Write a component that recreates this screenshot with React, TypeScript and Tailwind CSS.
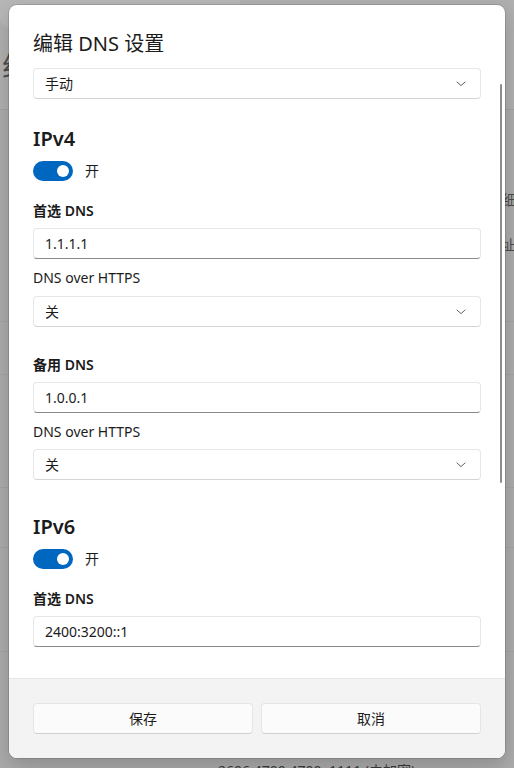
import React from 'react';

const font = { fontFamily: '"Noto Sans", "Noto Sans CJK SC", sans-serif' };

const Chevron = () => (
  <svg width="10" height="6" viewBox="0 0 10 6" fill="none">
    <path d="M1 1 L5 4.6 L9 1" stroke="#5f5f5f" strokeWidth="1" strokeLinecap="round" strokeLinejoin="round" />
  </svg>
);

const Select = ({ value, className = '' }: { value: string; className?: string }) => (
  <div className={`flex items-center justify-between h-[31px] px-[11px] pr-[14px] rounded-[4px] bg-white border border-[#e6e6e6] border-b-[#d4d4d4] text-[14px] text-[#1b1b1b] ${className}`}>
    <span>{value}</span>
    <Chevron />
  </div>
);

const TextBox = ({ value, className = '' }: { value: string; className?: string }) => (
  <div className={`flex items-center h-[31px] px-[11px] rounded-[4px] bg-white border border-[#e6e6e6] border-b-[#8a8a8a] text-[14px] text-[#1b1b1b] ${className}`}>
    {value}
  </div>
);

const Toggle = ({ className = '' }: { className?: string }) => (
  <div className={`flex items-center gap-3 ${className}`}>
    <div className="w-10 h-5 rounded-full bg-[#0067c0] flex items-center justify-end pr-1">
      <div className="w-3 h-3 rounded-full bg-white" />
    </div>
    <span className="text-[14px] text-[#1b1b1b] leading-5">开</span>
  </div>
);

const Label = ({ children, bold, className = '' }: { children: React.ReactNode; bold?: boolean; className?: string }) => (
  <div className={`text-[14px] leading-5 text-[#1b1b1b] ${bold ? 'font-semibold' : ''} ${className}`}>{children}</div>
);

const App: React.FC = () => {
  return (
    <div className="relative w-[514px] h-[768px] overflow-hidden bg-[#ababab]" style={font}>
      {/* dimmed settings page behind the dialog */}
      <div className="flex flex-col h-full">
        <div className="relative h-[110px] bg-[#afafaf] border-b border-[#a2a2a2]">
          <div className="absolute left-0 top-[-12px] w-[240px] h-[40px] rounded-[10px] bg-[#b6b6b6]" />
          <div className="absolute left-[2px] top-[48px] text-[28px] text-[#4a4a4a] leading-9">组</div>
        </div>
        <div className="relative h-[212px] border-b border-[#a3a3a3]">
          <div className="absolute left-[502px] top-[80px] text-[14px] text-[#4a4a4a] leading-5 whitespace-nowrap">细</div>
          <div className="absolute left-[501px] top-[125px] text-[14px] text-[#4a4a4a] leading-5 whitespace-nowrap">址</div>
        </div>
        <div className="h-[53px] border-b border-[#a3a3a3]" />
        <div className="h-[113px] border-b border-[#a3a3a3]" />
        <div className="h-[60px] border-b border-[#a3a3a3]" />
        <div className="h-[104px] border-b border-[#a3a3a3]" />
        <div className="relative flex-1">
          <div className="absolute left-[218px] top-[109px] text-[14px] text-[#3a3a3a] leading-5 whitespace-nowrap">2606:4700:4700::1111 (未加密)</div>
        </div>
      </div>

      {/* dialog */}
      <div className="absolute left-[9px] top-[5px] w-[496px] h-[753px] flex flex-col bg-white rounded-[8px] overflow-hidden shadow-[0_0_0_1px_rgba(0,0,0,0.12),0_8px_20px_rgba(0,0,0,0.18)]">
        <div className="relative flex-1 overflow-hidden px-6 pt-[25px]">
          <div className="text-[20px] leading-7 text-[#1b1b1b]">编辑 DNS 设置</div>
          <Select value="手动" className="mt-[10px]" />

          <div className="mt-[26px] text-[20px] leading-7 font-semibold text-[#1b1b1b]">IPv4</div>
          <Toggle className="mt-2" />

          <Label bold className="mt-5">首选 DNS</Label>
          <TextBox value="1.1.1.1" className="mt-[7px]" />
          <Label className="mt-[9px]">DNS over HTTPS</Label>
          <Select value="关" className="mt-2" />

          <Label bold className="mt-7">备用 DNS</Label>
          <TextBox value="1.0.0.1" className="mt-[7px]" />
          <Label className="mt-[9px]">DNS over HTTPS</Label>
          <Select value="关" className="mt-[7px]" />

          <div className="mt-[33px] text-[20px] leading-7 font-semibold text-[#1b1b1b]">IPv6</div>
          <Toggle className="mt-2" />

          <Label bold className="mt-5">首选 DNS</Label>
          <TextBox value="2400:3200::1" className="mt-[7px]" />

          {/* scrollbar */}
          <div className="absolute left-[491px] top-[79px] w-[2px] h-[399px] rounded-full bg-[#8c8c8c]" />
        </div>

        <div className="border-t border-[#e5e5e5] bg-[#f3f3f3] p-6 flex gap-2">
          <button className="flex-1 h-[31px] rounded-[4px] bg-[#fbfbfb] border border-[#e5e5e5] border-b-[#d0d0d0] text-[14px] text-[#1b1b1b]">保存</button>
          <button className="flex-1 h-[31px] rounded-[4px] bg-[#fbfbfb] border border-[#e5e5e5] border-b-[#d0d0d0] text-[14px] text-[#1b1b1b]">取消</button>
        </div>
      </div>
    </div>
  );
};

export default App;
